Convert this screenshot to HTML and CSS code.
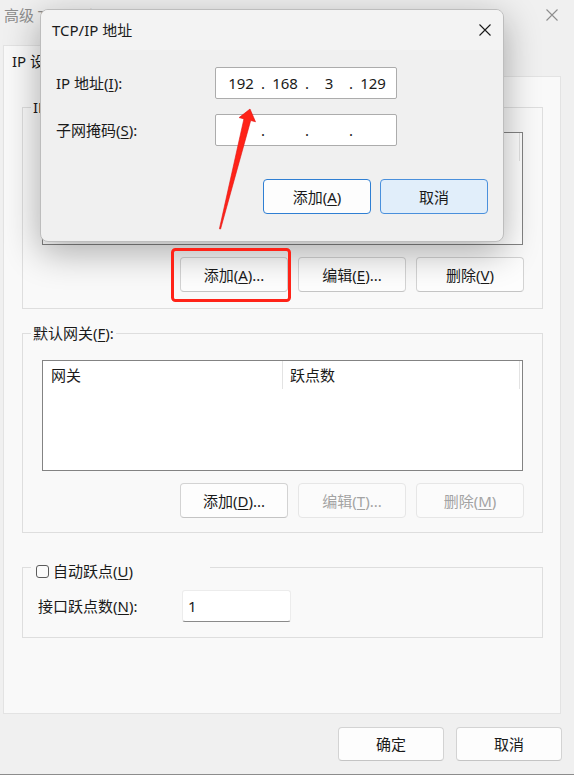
FILE: index.html
```html
<!DOCTYPE html>
<html lang="zh">
<head>
    <meta charset="UTF-8">
    <meta name="viewport" content="width=device-width, initial-scale=1.0">
    <title>高级 TCP/IP 设置</title>
    <link rel="stylesheet" href="styles.css">
</head>
<body>
    <div class="window">
        <!-- 标题栏 -->
        <div class="titlebar">
            <span class="title">高级 TCP/IP 设置</span>
            <svg class="close-icon" width="12" height="12" viewBox="0 0 12 12">
                <path d="M0.5 0.5 L11.5 11.5 M11.5 0.5 L0.5 11.5" stroke="#8d8d8d" stroke-width="1.1" fill="none"/>
            </svg>
        </div>

        <!-- 选项卡 -->
        <div class="tabs">
            <div class="tab active">IP 设置</div>
            <div class="tab">DNS</div>
            <div class="tab">WINS</div>
        </div>

        <div class="tab-page">
            <fieldset class="group group-ip">
                <legend>IP 地址(<u>R</u>):</legend>
                <div class="listview lv-ip">
                    <div class="lv-header">
                        <span class="col col-a"></span>
                        <span class="col col-b"></span>
                    </div>
                </div>
                <div class="btn-row">
                    <button class="btn">添加(<u>A</u>)...</button>
                    <button class="btn">编辑(<u>E</u>)...</button>
                    <button class="btn">删除(<u>V</u>)</button>
                </div>
            </fieldset>

            <fieldset class="group group-gw">
                <legend>默认网关(<u>F</u>):</legend>
                <div class="listview lv-gw">
                    <div class="lv-header">
                        <span class="col col-a">网关</span>
                        <span class="col col-b">跃点数</span>
                    </div>
                </div>
                <div class="btn-row">
                    <button class="btn">添加(<u>D</u>)...</button>
                    <button class="btn" disabled>编辑(<u>T</u>)...</button>
                    <button class="btn" disabled>删除(<u>M</u>)</button>
                </div>
            </fieldset>

            <fieldset class="group group-hop">
                <legend>
                    <span class="checkbox"></span>
                    <span>自动跃点(<u>U</u>)</span>
                </legend>
                <div class="hop-row">
                    <label class="hop-label">接口跃点数(<u>N</u>):</label>
                    <div class="textbox">1</div>
                </div>
            </fieldset>
        </div>

        <div class="footer">
            <button class="btn btn-wide">确定</button>
            <button class="btn btn-wide">取消</button>
        </div>
    </div>

    <!-- 弹出的 TCP/IP 地址对话框 -->
    <div class="dialog">
        <div class="dialog-title">
            <span>TCP/IP 地址</span>
            <svg width="12" height="12" viewBox="0 0 12 12">
                <path d="M0.5 0.5 L11.5 11.5 M11.5 0.5 L0.5 11.5" stroke="#1a1a1a" stroke-width="1.1" fill="none"/>
            </svg>
        </div>
        <div class="dialog-body">
            <div class="form-row">
                <span class="form-label">IP 地址(<u>I</u>):</span>
                <div class="ip-field">
                    <span class="seg">192</span><span class="dot">.</span>
                    <span class="seg">168</span><span class="dot">.</span>
                    <span class="seg">3</span><span class="dot">.</span>
                    <span class="seg">129</span>
                </div>
            </div>
            <div class="form-row">
                <span class="form-label">子网掩码(<u>S</u>):</span>
                <div class="ip-field">
                    <span class="seg"></span><span class="dot">.</span>
                    <span class="seg"></span><span class="dot">.</span>
                    <span class="seg"></span><span class="dot">.</span>
                    <span class="seg"></span>
                </div>
            </div>
            <div class="dialog-buttons">
                <button class="btn btn-default">添加(<u>A</u>)</button>
                <button class="btn btn-focus">取消</button>
            </div>
        </div>
    </div>

    <!-- 标注：红框和箭头 -->
    <svg class="annotation" width="574" height="775" viewBox="0 0 574 775">
        <rect x="172.5" y="249.5" width="117" height="51" rx="3" fill="none" stroke="#ff2318" stroke-width="3"/>
        <polygon points="250,109 255.5,121.8 250.7,120.5 220.6,229 219.4,228.8 243.9,118.9 239.1,117.6" fill="#ff2318" stroke="#e01010" stroke-width="0.6"/>
    </svg>
</body>
</html>
```

FILE: styles.css
```css
* {
    box-sizing: border-box;
}
body {
    margin: 0;
    width: 574px;
    height: 775px;
    overflow: hidden;
    position: relative;
    background: #f0f0f0;
    font-family: "Segoe UI", "Noto Sans", "Noto Sans CJK SC", sans-serif;
    font-size: 15px;
    line-height: 20px;
    color: #1a1a1a;
}
u {
    text-underline-offset: 2px;
}

/* 主窗口 */
.window {
    height: 775px;
    border-bottom: 1px solid #8c8c8c;
    display: flex;
    flex-direction: column;
}
.titlebar {
    height: 30px;
    display: flex;
    align-items: center;
    justify-content: space-between;
    padding: 0 16px 0 4px;
    color: #8d8d8d;
}

.tabs {
    display: flex;
    align-items: flex-end;
    padding: 15px 0 0 3px;
}
.tab {
    height: 29px;
    padding: 0 10px;
    border: 1px solid #e3e3e3;
    border-bottom: none;
    line-height: 28px;
}
.tab.active {
    height: 32px;
    padding: 0 12px 0 8px;
    margin-bottom: -1px;
    background: #f9f9f9;
    line-height: 30px;
    position: relative;
    z-index: 1;
}

.tab-page {
    margin-left: 3px;
    width: 558px;
    height: 638px;
    flex: none;
    background: #f9f9f9;
    border: 1px solid #e3e3e3;
}

/* 分组框 */
.group {
    margin: 0 0 0 18px;
    width: 521px;
    padding: 0;
    border: 1px solid #dedede;
    min-inline-size: 0;
}
.group legend {
    margin-left: 8px;
    padding: 0 2px;
    line-height: 20px;
}
.group-ip {
    margin-top: 20px;
    padding: 15px 0 16px 0;
}
.group-gw {
    margin-top: 14px;
    padding: 17px 0 14px 0;
}
.group-hop {
    margin-top: 20px;
    padding: 9px 0 15px 0;
}
.group-hop legend {
    width: 179px;
    padding: 8px 0 0 5px;
    display: flex;
    align-items: center;
    gap: 4px;
}

.checkbox {
    width: 13px;
    height: 13px;
    border: 1px solid #5c5c5c;
    border-radius: 3px;
    background: #fbfbfb;
}

/* 列表 */
.listview {
    margin-left: 19px;
    width: 481px;
    background: #fff;
    border: 1px solid #838383;
}
.lv-ip {
    height: 113px;
}
.lv-gw {
    height: 111px;
}
.lv-header {
    display: flex;
    height: 28px;
    line-height: 28px;
}
.col {
    border-right: 1px solid #e3e3e3;
}
.col-a {
    width: 240px;
    padding-left: 8px;
}
.col-b {
    width: 237px;
    padding-left: 7px;
}

.btn-row {
    margin: 12px 0 0 19px;
    width: 482px;
    display: flex;
    justify-content: flex-end;
    gap: 10px;
}

/* 按钮 */
.btn {
    width: 108px;
    height: 35px;
    padding: 0;
    font: inherit;
    color: #1a1a1a;
    background: #fdfdfd;
    border: 1px solid #d3d3d3;
    border-bottom-color: #c4c4c4;
    border-radius: 4px;
}
.btn:disabled {
    color: #a3a3a3;
    background: #fbfbfb;
    border-color: #e6e6e6;
}
.btn-wide {
    width: 106px;
    height: 34px;
}
.btn-default {
    border: 1px solid #2f7fd3;
    background: #fdfdfd;
}
.btn-focus {
    border: 1px solid #4a90dc;
    background: #e1eefa;
}

/* 跃点数 */
.hop-row {
    display: flex;
    align-items: center;
    padding-left: 15px;
}
.hop-label {
    width: 144px;
}
.textbox {
    width: 109px;
    height: 32px;
    padding-left: 5px;
    line-height: 30px;
    background: #fff;
    border: 1px solid #ececec;
    border-bottom-color: #8a8a8a;
    border-radius: 3px;
}

.footer {
    margin-top: 13px;
    padding-right: 12px;
    display: flex;
    justify-content: flex-end;
    gap: 12px;
}

/* 对话框 */
.dialog {
    position: absolute;
    left: 40px;
    top: 9px;
    z-index: 10;
    width: 464px;
    height: 233px;
    background: #f0f0f0;
    border: 1px solid #bdbdbd;
    border-radius: 8px;
    box-shadow: 0 10px 36px rgba(0, 0, 0, 0.32);
    overflow: hidden;
}
.dialog-title {
    height: 40px;
    display: flex;
    align-items: center;
    justify-content: space-between;
    padding: 0 12px 0 11px;
    background: #f3f3f3;
}
.dialog-body {
    padding: 17px 15px 0 15px;
}
.form-row {
    display: flex;
    align-items: center;
}
.form-row + .form-row {
    margin-top: 15px;
}
.form-label {
    width: 159px;
}
.ip-field {
    width: 182px;
    height: 32px;
    display: flex;
    align-items: center;
    padding-left: 7px;
    background: #fff;
    border: 1px solid #acacac;
    border-radius: 2px;
}
.seg {
    width: 36px;
    text-align: center;
}
.dot {
    width: 8px;
    text-align: center;
}
.dialog-buttons {
    margin-top: 33px;
    display: flex;
    justify-content: flex-end;
    gap: 9px;
}

.annotation {
    position: absolute;
    left: 0;
    top: 0;
    z-index: 11;
    pointer-events: none;
}
```
